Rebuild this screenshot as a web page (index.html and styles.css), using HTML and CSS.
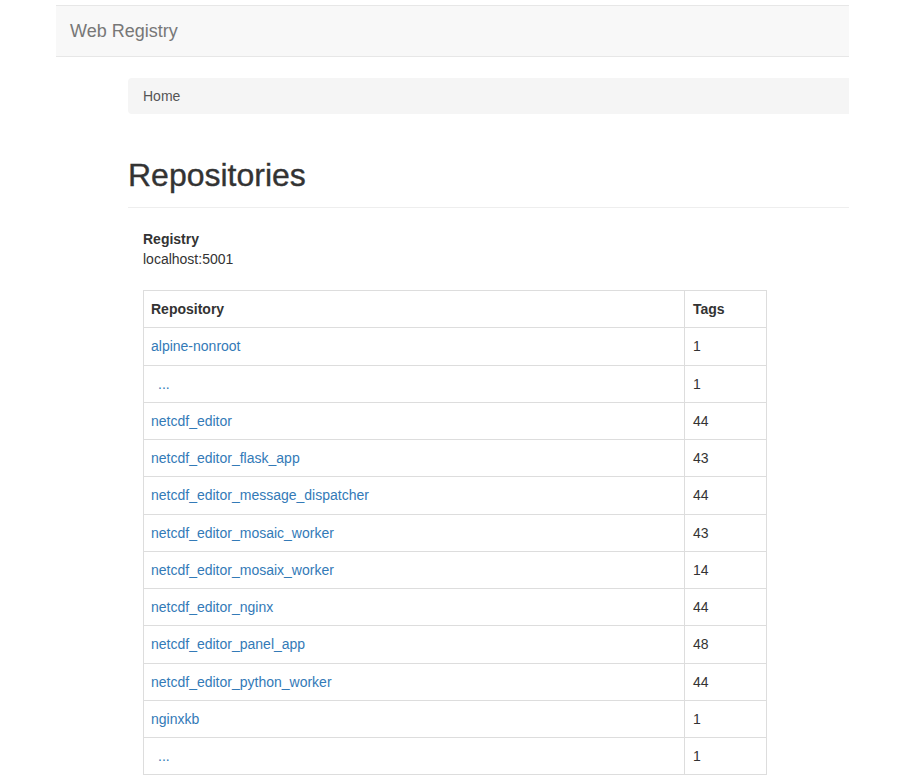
FILE: index.html
```html
<!DOCTYPE html>
<html>
<head>
<meta charset="utf-8">
<title>Web Registry</title>
<link rel="stylesheet" href="styles.css">
</head>
<body>
<div class="page">
  <nav class="navbar">
    <a class="brand" href="#">Web Registry</a>
  </nav>
  <div class="content">
    <div class="breadcrumb">Home</div>
    <div class="page-header">
      <h1>Repositories</h1>
    </div>
    <div class="registry">
      <div class="label">Registry</div>
      <div class="value">localhost:5001</div>
    </div>
    <table class="repos">
      <thead>
        <tr><th class="col-name">Repository</th><th class="col-tags">Tags</th></tr>
      </thead>
      <tbody>
        <tr><td><a href="#">alpine-nonroot</a></td><td>1</td></tr>
        <tr><td class="indent"><a href="#">...</a></td><td>1</td></tr>
        <tr><td><a href="#">netcdf_editor</a></td><td>44</td></tr>
        <tr><td><a href="#">netcdf_editor_flask_app</a></td><td>43</td></tr>
        <tr><td><a href="#">netcdf_editor_message_dispatcher</a></td><td>44</td></tr>
        <tr><td><a href="#">netcdf_editor_mosaic_worker</a></td><td>43</td></tr>
        <tr><td><a href="#">netcdf_editor_mosaix_worker</a></td><td>14</td></tr>
        <tr><td><a href="#">netcdf_editor_nginx</a></td><td>44</td></tr>
        <tr><td><a href="#">netcdf_editor_panel_app</a></td><td>48</td></tr>
        <tr><td><a href="#">netcdf_editor_python_worker</a></td><td>44</td></tr>
        <tr><td><a href="#">nginxkb</a></td><td>1</td></tr>
        <tr><td class="indent"><a href="#">...</a></td><td>1</td></tr>
      </tbody>
    </table>
  </div>
</div>
</body>
</html>
```

FILE: styles.css
```css
html, body {
  margin: 0;
  padding: 0;
  background: #fff;
}
body {
  font-family: "Liberation Sans", Arial, Helvetica, sans-serif;
  font-size: 14px;
  line-height: 20px;
  color: #333;
  overflow: hidden;
}
.page {
  padding-top: 5px;
}
.navbar {
  margin-left: 56px;
  width: 793px;
  height: 50px;
  background: #f8f8f8;
  border-top: 1px solid #e7e7e7;
  border-bottom: 1px solid #e7e7e7;
  display: flex;
  align-items: center;
  box-sizing: content-box;
}
.brand {
  padding-left: 14px;
  font-size: 18px;
  color: #777;
  text-decoration: none;
  line-height: 20px;
}
.content {
  margin-left: 128px;
  width: 721px;
  padding-top: 21px;
}
.breadcrumb {
  background: #f5f5f5;
  border-radius: 4px 0 0 4px;
  padding: 8px 15px;
  color: #555;
  height: 20px;
}
.page-header {
  margin-top: 40px;
  border-bottom: 1px solid #eee;
  padding-bottom: 10px;
}
.page-header h1 {
  margin: 0;
  font-size: 32px;
  font-weight: normal;
  -webkit-text-stroke: 0.35px #333;
  line-height: 43px;
  color: #333;
}
.registry {
  margin-top: 21px;
  padding-left: 15px;
}
.registry .label {
  font-weight: bold;
  line-height: 20px;
}
.registry .value {
  line-height: 20px;
}
.repos {
  margin-top: 21px;
  margin-left: 15px;
  width: 624px;
  border-collapse: collapse;
  border: 1px solid #ddd;
}
.repos th, .repos td {
  border: 1px solid #ddd;
  padding: 8px 8px 8px 7px;
  line-height: 20.25px;
  text-align: left;
  vertical-align: top;
}
.repos th + th, .repos td + td {
  padding-left: 8px;
}
.repos th {
  font-weight: bold;
}
.repos .col-name {
  width: 525px;
}
.repos td.indent {
  padding-left: 14px;
}
.repos a {
  color: #337ab7;
  text-decoration: none;
}
```
